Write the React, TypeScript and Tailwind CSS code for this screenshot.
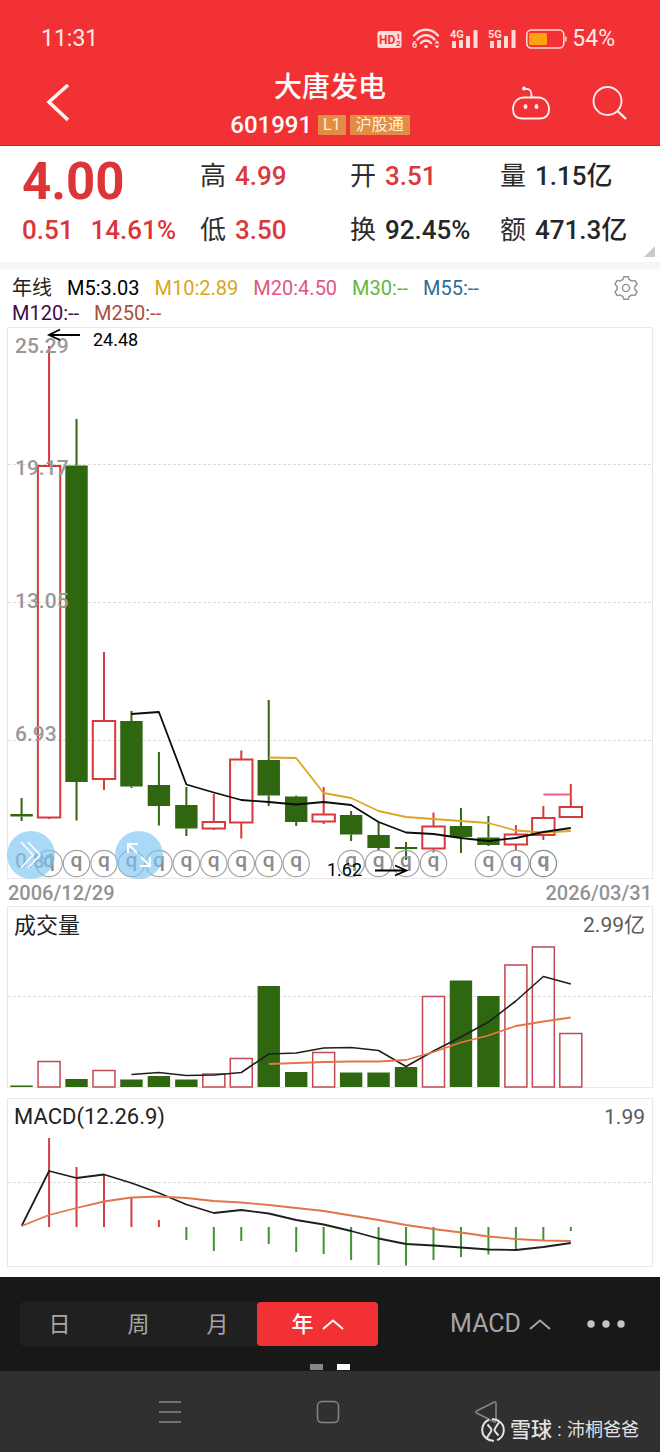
"use client";

import { useState } from "react";

const RED = "#d8393b";
const GREEN = "#2f6610";

// all three panels share one coordinate space, each svg shows its own slice of it
const candleX = (i: number) => 21.6 + i * 27.46;

type Candle = [high: number, top: number, bottom: number, low: number, up: boolean];

const CANDLES: Candle[] = [
  [798, 814, 816.5, 821, false],
  [346, 466, 817.5, 819, true],
  [419, 465.5, 782, 820.5, false],
  [652, 721, 779, 790, true],
  [711, 721, 786.5, 788, false],
  [752, 785, 806, 825.5, false],
  [787, 805, 828.5, 836, false],
  [794, 822, 828.5, 830, true],
  [750.5, 759.5, 822.5, 838.5, true],
  [700, 760, 795.5, 806, false],
  [795.5, 796.5, 822, 826, false],
  [787, 814.5, 821.5, 824, true],
  [811, 815, 834.5, 841, false],
  [822, 835, 848, 850, false],
  [842, 847, 849, 860, false],
  [812.5, 826.5, 848.5, 852.5, true],
  [808, 826, 837, 853, false],
  [816, 837.5, 845, 846, false],
  [825, 834.5, 844.5, 850, true],
  [806, 818, 835, 840, true],
  [784, 807, 817, 817, true],
];

const M5 = [714, 712, 784.5, 792.5, 800, 802, 804.5, 802, 805, 822, 832.5, 834, 838, 841, 838, 832, 828];
const M10 = [757.5, 758, 793, 798, 811, 817, 819, 821, 823, 830.5, 832.5, 831];
const M20 = [794.5, 794.5];

const DIVIDENDS = [1, 2, 3, 4, 5, 6, 7, 8, 9, 10, 12, 13, 14, 15, 17, 18, 19];

const PRICE_LABELS = [
  { text: "25.29", y: 353 },
  { text: "19.17", y: 475 },
  { text: "13.05", y: 608 },
  { text: "6.93", y: 741 },
  { text: "0.81", y: 868 },
];

const VOLUME = [
  1085.5, 1061, 1079, 1070, 1079.5, 1076, 1079.5, 1073.5, 1058, 986, 1072, 1052, 1072.5, 1072.5, 1067, 996,
  980.5, 996, 964.5, 946.5, 1033,
];
const VOL_MA5 = [
  1074.5, 1072.5, 1075.5, 1075, 1072.5, 1054, 1053, 1048, 1047.5, 1050.5, 1066.5, 1051, 1037, 1022, 1001,
  976.5, 984,
];
const VOL_MA10 = [1064, 1063, 1062, 1061.5, 1061.5, 1060, 1052, 1042.5, 1035.5, 1026, 1021.5, 1017.5];

const MACD_ZERO = 1227;
const MACD_BARS = [
  1227, 1138, 1167, 1174, 1198, 1220, 1240, 1251, 1241, 1244, 1252, 1254, 1260, 1265, 1265.5, 1260, 1257,
  1254.5, 1250, 1240, 1231,
];
const DIF = [
  1226, 1171, 1178, 1174.5, 1183, 1193, 1204.5, 1213, 1210, 1213.5, 1220, 1224.5, 1231, 1238.5, 1244, 1245.5,
  1247.5, 1249.5, 1250, 1247, 1243,
];
const DEA = [
  1226, 1215, 1208, 1201.5, 1197.5, 1196.5, 1198, 1201, 1202.5, 1205, 1208, 1211, 1215.5, 1220, 1225, 1229,
  1232.5, 1236.5, 1239, 1240.5, 1241,
];

const MA_ROWS = [
  [
    { text: "M5:3.03", color: "text-black" },
    { text: "M10:2.89", color: "text-[#d9a520]" },
    { text: "M20:4.50", color: "text-[#e0597d]" },
    { text: "M30:--", color: "text-[#63b83f]" },
    { text: "M55:--", color: "text-[#2d6c98]" },
  ],
  [
    { text: "M120:--", color: "text-[#3d0a4e]" },
    { text: "M250:--", color: "text-[#a8503c]" },
  ],
];

const QUOTES = [
  { label: "高", value: "4.99", up: true },
  { label: "开", value: "3.51", up: true },
  { label: "量", value: "1.15亿", up: false },
  { label: "低", value: "3.50", up: true },
  { label: "换", value: "92.45%", up: false },
  { label: "额", value: "471.3亿", up: false },
];

const PERIODS = ["日", "周", "月", "年"];

function Line({ values, start, color, width = 1.8 }: { values: number[]; start: number; color: string; width?: number }) {
  return (
    <polyline
      points={values.map((y, i) => `${candleX(start + i)},${y}`).join(" ")}
      fill="none"
      stroke={color}
      strokeWidth={width}
      strokeLinejoin="round"
    />
  );
}

function Grid({ y }: { y: number }) {
  return <line x1="8" x2="652" y1={y} y2={y} stroke="#dcdcdc" strokeWidth="1.2" strokeDasharray="3 2" />;
}

function Frame({ y, height }: { y: number; height: number }) {
  return <rect x="7.5" y={y} width="645" height={height} fill="none" stroke="#e9e9e9" />;
}

function StatusBar() {
  return (
    <div className="flex items-center justify-between pr-[45px] pl-[41px] text-[23px] leading-7 text-[#ffe9e6]">
      <span>11:31</span>
      <div className="flex items-center gap-[10px]">
        <svg width="25" height="22" viewBox="0 0 25 22">
          <rect x="0.5" y="3" width="24" height="17" rx="2.5" fill="#ffdcd8" />
          <text x="2" y="16" fontSize="12" fontWeight="700" fill="#f03033">HD</text>
          <text x="19" y="11" fontSize="8" fontWeight="700" fill="#f03033">1</text>
          <text x="19" y="18" fontSize="8" fontWeight="700" fill="#f03033">2</text>
        </svg>
        <svg width="28" height="22" viewBox="0 0 28 22" fill="none" stroke="#ffdcd8" strokeWidth="2.4" strokeLinecap="round">
          <path d="M2 7.5C8.5-.2 19.5-.2 26 7.5" />
          <path d="M5.5 11.5c4.8-5.6 12.2-5.6 17 0" />
          <path d="M9 15c3-3.4 7-3.4 10 0" />
          <circle cx="14" cy="18.5" r="1.8" fill="#ffdcd8" stroke="none" />
          <path d="M22.5 15.5h5L25 12.5zM22.5 17.5h5L25 20.5z" fill="#ffdcd8" stroke="none" />
          <text x="0" y="20" fontSize="9" fontWeight="700" fill="#ffdcd8" stroke="none">6</text>
        </svg>
        {["4G", "5G"].map((net) => (
          <svg key={net} width="28" height="22" viewBox="0 0 28 22" fill="#ffdcd8">
            <text x="0" y="9.5" fontSize="11" fontWeight="700">{net}</text>
            <rect x="2" y="13" width="4" height="7" />
            <rect x="9" y="12" width="4" height="8" />
            <rect x="16" y="8" width="4" height="12" />
            <rect x="23.5" y="2" width="4" height="18" />
          </svg>
        ))}
        <div className="flex items-center gap-[5px]">
          <svg width="41" height="22" viewBox="0 0 41 22">
            <rect x="0.8" y="2" width="37" height="18" rx="4.5" fill="none" stroke="#ffdcd8" strokeWidth="1.5" />
            <rect x="3" y="5" width="18" height="12" rx="1.5" fill="#fda30f" />
            <path d="M39.8 8.5v5" stroke="#ffdcd8" strokeWidth="1.5" />
          </svg>
          <span>54%</span>
        </div>
      </div>
    </div>
  );
}

function Header() {
  return (
    <header className="border-b border-[#b8292b] bg-[#f23134] pt-[25px] pb-[6px] text-white">
      <StatusBar />
      <div className="mt-4 grid grid-cols-[1fr_auto_1fr] items-center">
        <button type="button" aria-label="返回" className="justify-self-start pl-[46px]">
          <svg width="24" height="40" viewBox="0 0 24 40" fill="none" stroke="#fff1ef" strokeWidth="3.6">
            <path d="M22 1 3 18 22 36" />
          </svg>
        </button>
        <div className="flex flex-col items-center">
          <h1 className="text-[28px] leading-[38px] font-medium">大唐发电</h1>
          <div className="mt-1 flex items-center gap-1 pr-5 leading-7">
            <span className="mr-[2px] text-[24px] font-medium">601991</span>
            <span className="rounded-[1px] bg-[#e28d45] px-[5px] text-base leading-5 text-[#fff0d8]">L1</span>
            <span className="rounded-[1px] bg-[#e28d45] px-[6px] text-base leading-5 text-[#fff0d8]">沪股通</span>
          </div>
        </div>
        <div className="flex items-center gap-[42px] justify-self-end pr-8">
          <button type="button" aria-label="助手">
            <svg width="38" height="36" viewBox="0 0 38 36" fill="none" stroke="#fff1ef" strokeWidth="1.8">
              <path d="M12 11.5c-7 0-11 5.5-11 11.5 0 7 4 9.5 9 9.5h18c5 0 9-2.5 9-9.5 0-6-4-11.5-11-11.5z" />
              <path d="M19.5 11.5V9c0-3.5-1.5-6-4.5-6h-3" />
              <circle cx="12" cy="2.5" r="2" fill="#fff1ef" stroke="none" />
              <ellipse cx="13.5" cy="20.5" rx="1.9" ry="2.5" fill="#fff1ef" stroke="none" />
              <ellipse cx="24.5" cy="20.5" rx="1.9" ry="2.5" fill="#fff1ef" stroke="none" />
            </svg>
          </button>
          <button type="button" aria-label="搜索">
            <svg width="36" height="36" viewBox="0 0 36 36" fill="none" stroke="#fff1ef" strokeWidth="1.8">
              <circle cx="15.5" cy="15" r="14" />
              <path d="m25.5 25 8.5 8" strokeWidth="2.4" />
            </svg>
          </button>
        </div>
      </div>
    </header>
  );
}

function QuotePanel() {
  return (
    <section className="relative flex pt-[14px] pb-4 pl-[22px] text-[26px] leading-8">
      <div className="w-[178px] shrink-0 font-medium text-[#dc3437]">
        <p className="mb-[10px] text-[51px] leading-[44px] font-bold">4.00</p>
        <p className="flex gap-[17px]">
          <span>0.51</span>
          <span>14.61%</span>
        </p>
      </div>
      <dl className="grid flex-1 grid-cols-[150fr_150fr_160fr] gap-y-[22px]">
        {QUOTES.map((q) => (
          <div key={q.label} className="flex gap-[9px] whitespace-nowrap">
            <dt className="text-[#2c2c2c]">{q.label}</dt>
            <dd className={q.up ? "font-medium text-[#d8393b]" : "font-medium text-[#262626]"}>{q.value}</dd>
          </div>
        ))}
      </dl>
      <svg className="absolute right-[5px] bottom-[5px]" width="11" height="11" viewBox="0 0 11 11">
        <path d="M11 0v11H0z" fill="#c9c9c9" />
      </svg>
    </section>
  );
}

function Legend() {
  return (
    <div className="flex items-start justify-between border-t-[7px] border-[#f6f6f6] pt-[7px] pr-[21px] pb-px pl-3 text-[20px] leading-[25px]">
      <div>
        {MA_ROWS.map((row, i) => (
          <div key={i} className="flex gap-[15px]">
            {i === 0 && <span className="text-[#222]">年线</span>}
            {row.map((ma) => (
              <span key={ma.text} className={ma.color}>
                {ma.text}
              </span>
            ))}
          </div>
        ))}
      </div>
      <button type="button" aria-label="设置" className="leading-none">
        <svg width="26" height="24" viewBox="-13 -12 26 24" fill="none" stroke="#8f8f8f" strokeWidth="1.4" strokeLinejoin="round">
          <path d="M-2.2-11.2H2.2L3-8.6 5.95-6.9 8.86-7.66 11.06-3.84 8.95-1.7V1.7L11.06 3.84 8.86 7.66 5.95 6.9 3 8.6 2.2 11.2H-2.2L-3 8.6-5.95 6.9-8.86 7.66-11.06 3.84-8.95 1.7V-1.7L-11.06-3.84-8.86-7.66-5.95-6.9-3-8.6z" />
          <circle r="3.6" />
        </svg>
      </button>
    </div>
  );
}

function PriceChart() {
  return (
    <div className="relative">
      <svg viewBox="0 327 660 552" className="block w-full">
        <Frame y={327.5} height={551} />
        <Grid y={464.5} />
        <Grid y={602.5} />
        <Grid y={740.5} />

        {CANDLES.map(([high, top, bottom, low, up], i) => {
          const x = candleX(i);
          const color = up ? RED : GREEN;
          return (
            <g key={i} stroke={color} strokeWidth="2">
              <line x1={x} x2={x} y1={high} y2={top} />
              <line x1={x} x2={x} y1={bottom} y2={low} />
              {up ? (
                <rect x={x - 11.2} y={top} width="22.4" height={bottom - top} fill="none" />
              ) : (
                <rect x={x - 11.2} y={top} width="22.4" height={bottom - top} fill={color} stroke="none" />
              )}
            </g>
          );
        })}

        {PRICE_LABELS.map((l) => (
          <text key={l.text} x="15" y={l.y} fontSize="21" fontWeight="500" fill="#999">
            {l.text}
          </text>
        ))}

        <Line values={M10} start={9} color="#dca624" />
        <Line values={M5} start={4} color="#0c0c0c" />
        <Line values={M20} start={19} color="#df5b78" />

        {DIVIDENDS.map((i) => (
          <g key={i}>
            <circle
              cx={candleX(i)}
              cy="863.5"
              r="13.2"
              fill="none"
              stroke={i === 19 ? "#8a8a8a" : "#a3a3a3"}
              strokeWidth="1.2"
            />
            <text
              x={candleX(i)}
              y="867"
              fontSize="21"
              fontWeight={i === 19 ? 700 : 500}
              textAnchor="middle"
              fill="#8c8c8c"
            >
              q
            </text>
          </g>
        ))}

        <g fill="none" stroke="#000" strokeWidth="1.8">
          <path d="M80 335H49M60 329.5 49 335l11 5" />
          <path d="M375 870.5h31M395 865.5l11.5 5-11.5 5" />
        </g>
        <text x="93" y="346" fontSize="18">24.48</text>
        <text x="327" y="876" fontSize="18">1.62</text>
      </svg>

      <button
        type="button"
        aria-label="展开"
        className="absolute bottom-0 left-[7px] flex size-12 items-center justify-center rounded-full bg-[#7cc4f5]/65"
      >
        <svg width="24" height="28" viewBox="0 0 24 28" fill="none" stroke="#fff" strokeWidth="1.6">
          <path d="M2 1l12 13L2 27M9 1l12 13L9 27" />
        </svg>
      </button>
      <button
        type="button"
        aria-label="全屏"
        className="absolute bottom-0 left-[115px] flex size-12 items-center justify-center rounded-full bg-[#7cc4f5]/65"
      >
        <svg width="26" height="26" viewBox="0 0 26 26" fill="none" stroke="#fff" strokeWidth="2">
          <path d="M2 11V2h10M2 2l9 9M24 15v9H14M24 24l-9-9" />
        </svg>
      </button>
    </div>
  );
}

function VolumeChart() {
  return (
    <svg viewBox="0 906 660 182" className="block w-full">
      <Frame y={906.5} height={181} />
      <Grid y={996.5} />
      {VOLUME.map((top, i) => {
        const up = CANDLES[i][4];
        return (
          <rect
            key={i}
            x={candleX(i) - (up ? 11 : 11.2)}
            y={up ? top + 0.5 : top}
            width={up ? 22 : 22.4}
            height={1087 - top - (up ? 0.5 : 0)}
            fill={up ? "none" : GREEN}
            stroke={up ? "#c04a50" : "none"}
            strokeWidth="1.5"
          />
        );
      })}
      <Line values={VOL_MA5} start={4} color="#1f1f1f" width={1.6} />
      <Line values={VOL_MA10} start={9} color="#e57645" />
      <text x="14" y="933" fontSize="22" fill="#222">成交量</text>
      <text x="645" y="932" fontSize="21" textAnchor="end" fill="#5a5a5a">2.99亿</text>
    </svg>
  );
}

function MacdChart() {
  return (
    <svg viewBox="0 1098 660 169" className="mt-[10px] block w-full">
      <Frame y={1098.5} height={168} />
      <Grid y={1182.5} />
      {MACD_BARS.map((y, i) => (
        <line
          key={i}
          x1={candleX(i)}
          x2={candleX(i)}
          y1={MACD_ZERO}
          y2={y}
          stroke={y < MACD_ZERO ? "#cf3f43" : "#3f9330"}
          strokeWidth="2"
        />
      ))}
      <Line values={DIF} start={0} color="#1f1f1f" />
      <Line values={DEA} start={0} color="#e0744a" />
      <text x="14" y="1124" fontSize="22" fill="#222">MACD(12.26.9)</text>
      <text x="645" y="1124" fontSize="21" textAnchor="end" fill="#5a5a5a">1.99</text>
    </svg>
  );
}

function Caret() {
  return (
    <svg width="22" height="11" viewBox="0 0 22 11" fill="none" stroke="currentColor" strokeWidth="2">
      <path d="M1 10 11 1.5 21 10" />
    </svg>
  );
}

function Toolbar() {
  const [period, setPeriod] = useState("年");

  return (
    <div className="bg-[#181818] pt-[25px] pb-px">
      <div className="flex items-center justify-between pr-[35px] pl-5 text-[#a6a6a6]">
        <div className="flex rounded bg-[#202020] text-[22px]">
          {PERIODS.map((p) => (
            <button
              key={p}
              type="button"
              onClick={() => setPeriod(p)}
              className={
                p === period
                  ? "flex h-11 w-[121px] items-center justify-center gap-2 rounded bg-[#f23134] font-medium text-white"
                  : "h-11 w-[79px]"
              }
            >
              {p}
              {p === period && <Caret />}
            </button>
          ))}
        </div>
        <div className="flex items-center gap-9">
          <button type="button" className="flex items-center gap-2 text-[25px]">
            MACD
            <Caret />
          </button>
          <button type="button" aria-label="更多">
            <svg width="38" height="10" viewBox="0 0 38 10" fill="#c4c4c4">
              <circle cx="4" cy="5" r="3.7" />
              <circle cx="19" cy="5" r="3.7" />
              <circle cx="34" cy="5" r="3.7" />
            </svg>
          </button>
        </div>
      </div>
      <div className="mt-[18px] flex justify-center gap-[14px]">
        <span className="h-[6px] w-[13px] bg-[#868686]" />
        <span className="h-[6px] w-[13px] bg-white" />
      </div>
    </div>
  );
}

function NavBar() {
  return (
    <nav className="relative flex h-[81px] items-center bg-[#303030] pr-[95px] pl-[91px]">
      <button type="button" aria-label="菜单" className="flex flex-1 justify-center">
        <svg width="24" height="24" viewBox="0 0 24 24" stroke="#868686" strokeWidth="1.6">
          <path d="M1 2h22M1 12h22M1 22h22" />
        </svg>
      </button>
      <button type="button" aria-label="主页" className="flex flex-1 justify-center">
        <svg width="24" height="24" viewBox="0 0 24 24" fill="none" stroke="#868686" strokeWidth="1.5">
          <rect x="1.5" y="1.5" width="21" height="21" rx="4.5" />
        </svg>
      </button>
      <button type="button" aria-label="后退" className="flex flex-1 justify-center">
        <svg width="24" height="24" viewBox="0 0 24 24" fill="none" stroke="#868686" strokeWidth="1.5" strokeLinejoin="round">
          <path d="M20.5 2 2.5 11q-1.5 1 0 2l18 9q1.5.5 1.5-1V3q0-1.5-1.5-1z" />
        </svg>
      </button>
      <div className="absolute right-[21px] bottom-2 flex items-center leading-[26px] text-[#e2e2e2]">
        <svg className="mr-[5px]" width="24" height="24" viewBox="0 0 24 24" fill="none" stroke="#e2e2e2" strokeWidth="2">
          <path d="M8 1.8a10.8 10.8 0 0 0-2.5 18.6M11 1.300a10.800 10.800 0 0 1 7.500 2.200M16 22.100a10.800 10.800 0 0 0 2.500-18.600M13 22.700a10.800 10.800 0 0 1-7.500-2.300" />
          <path d="M6.500 6.500 10 10.500q1 1.500 0 3l-4.500 6.900M18.500 3.500 14 10.500q-1 1.500 0 3l3.500 4" />
        </svg>
        <span className="text-[21px] font-medium">雪球</span>
        <span className="w-[15px] text-center text-lg">:</span>
        <span className="text-lg">沛桐爸爸</span>
      </div>
    </nav>
  );
}

export default function App() {
  return (
    <div className="bg-white font-['Roboto','Noto_Sans_CJK_SC',sans-serif]">
      <Header />
      <main>
        <QuotePanel />
        <Legend />
        <PriceChart />
        <div className="flex h-[27px] items-center justify-between px-2 text-[20px] font-medium text-[#929292]">
          <span>2006/12/29</span>
          <span>2026/03/31</span>
        </div>
        <VolumeChart />
        <MacdChart />
      </main>
      <footer className="mt-[10px]">
        <Toolbar />
        <NavBar />
      </footer>
    </div>
  );
}
